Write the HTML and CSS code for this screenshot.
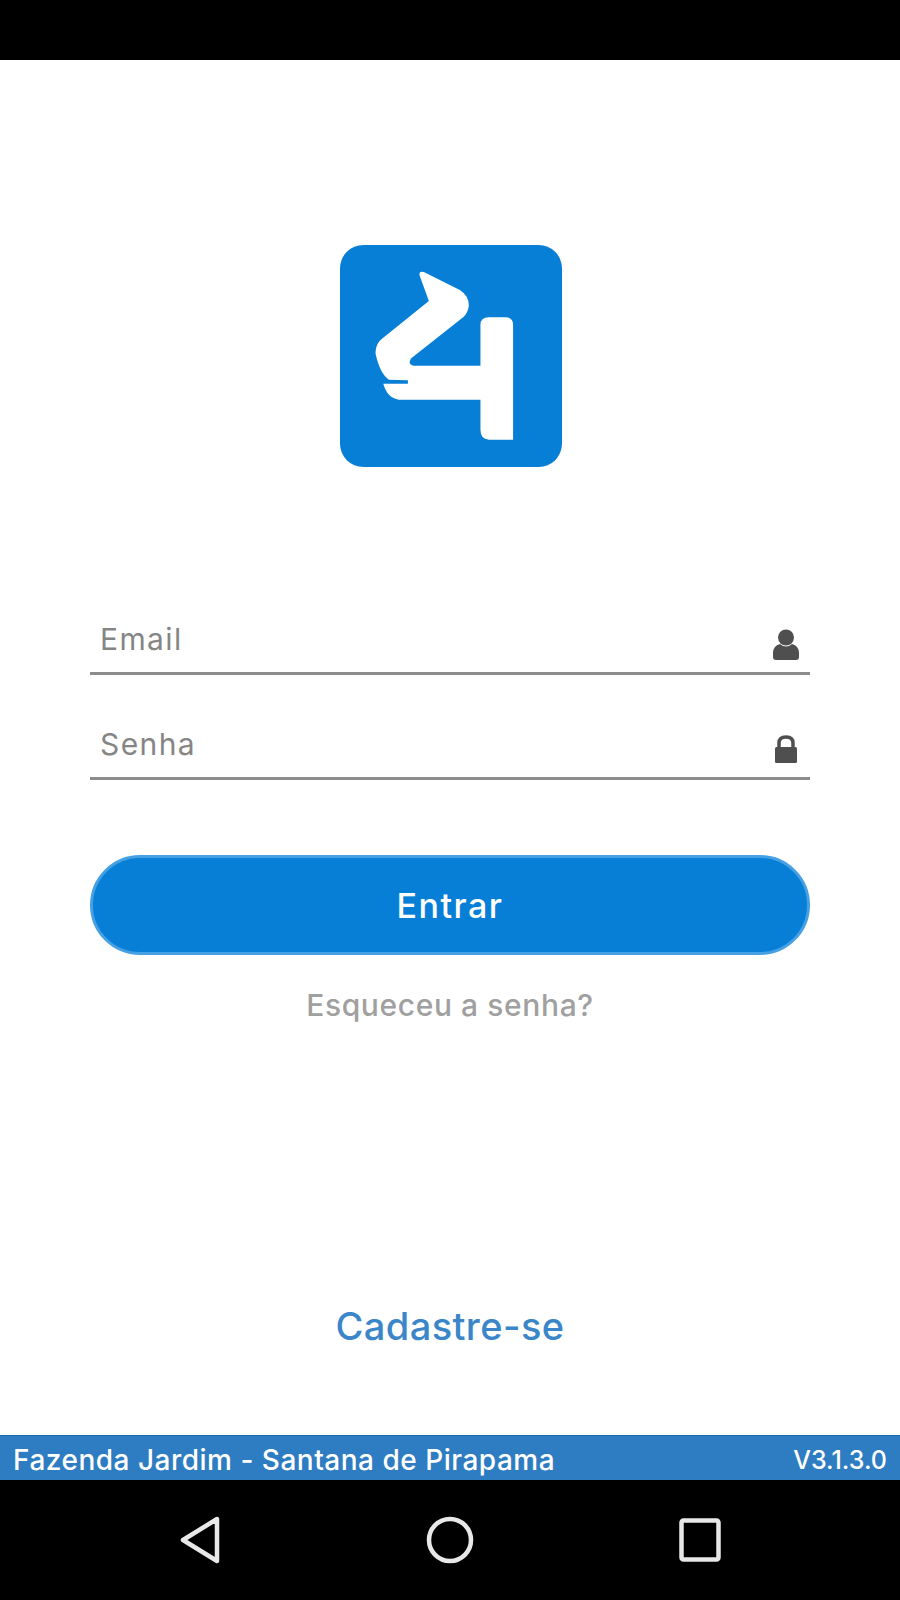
FILE: index.html
```html
<!DOCTYPE html>
<html lang="pt-BR">
<head>
  <meta charset="UTF-8" />
  <meta name="viewport" content="width=device-width, initial-scale=1.0"/>
  <title>Login</title>
  <link rel="stylesheet" href="styles.css">
</head>
<body>

  <div class="status-bar"></div>

  <main class="login">
    <svg class="logo" viewBox="58 45 667 667" aria-label="Logo">
      <rect x="58" y="45" width="667" height="667" rx="70" fill="#087fd6"/>
      <path fill="#fff" d="M297 136 Q294 122 310 126 L418 180 Q446 198 445 228 Q442 250 428 262 L272 385 Q260 402 278 408 L480 408 L480 285 Q480 262 505 262 L555 262 Q578 262 578 285 L578 630 L505 630 Q480 628 480 600 L480 510 L235 510 Q200 505 188 462 L262 462 L262 451 L205 450 Q178 432 165 372 Q163 342 186 325 L325 213 Z"/>
    </svg>

    <form class="login-form">
      <label class="field">
        <input type="text" placeholder="Email" />
        <svg class="field-icon" viewBox="0 0 26 32">
          <circle cx="13" cy="8.5" r="8" fill="#4f4f4f"/>
          <path fill="#4f4f4f" d="M7 15 Q13 20 19 15 Q26 17 26 24 L26 28 Q26 31 23 31 L3 31 Q0 31 0 28 L0 24 Q0 17 7 15 Z"/>
        </svg>
      </label>
      <label class="field">
        <input type="password" placeholder="Senha" />
        <svg class="field-icon" viewBox="0 0 26 32">
          <path fill="none" stroke="#4f4f4f" stroke-width="3.5" d="M6 16 L6 9 Q6 3 13 3 Q20 3 20 9 L20 16"/>
          <rect x="2" y="13" width="22" height="16" rx="1.5" fill="#4f4f4f"/>
        </svg>
      </label>
      <button type="button" class="btn-enter">Entrar</button>
      <a class="forgot">Esqueceu a senha?</a>
    </form>

    <a class="signup">Cadastre-se</a>
  </main>

  <div class="info-bar">
    <span>Fazenda Jardim - Santana de Pirapama</span>
    <span class="version">V3.1.3.0</span>
  </div>

  <nav class="nav-bar">
    <svg class="nav-icon" viewBox="0 0 40 48">
      <path fill="none" stroke="#e8e8e8" stroke-width="4.5" stroke-linejoin="round" d="M37 3 L37 45 L3 24 Z"/>
    </svg>
    <svg class="nav-icon" viewBox="0 0 48 48">
      <circle cx="24" cy="24" r="21" fill="none" stroke="#e8e8e8" stroke-width="4.5"/>
    </svg>
    <svg class="nav-icon" viewBox="0 0 42 44">
      <rect x="2.5" y="2.5" width="37" height="39" rx="2" fill="none" stroke="#e8e8e8" stroke-width="4.5"/>
    </svg>
  </nav>

</body>
</html>
```

FILE: styles.css
```css
body {
  margin: 0;
  height: 1600px;
  display: flex;
  flex-direction: column;
  background: #fff;
  font-family: 'Inter', sans-serif;
}

.status-bar {
  height: 60px;
  background: #000;
}

.login {
  flex: 1;
  display: flex;
  flex-direction: column;
  align-items: center;
  padding-top: 185px;
}

.logo {
  width: 222px;
  height: 222px;
  margin-left: 2px;
}

.login-form {
  width: 720px;
  margin-top: 142px;
  display: flex;
  flex-direction: column;
}

.field {
  height: 63px;
  border-bottom: 3px solid #8c8c8c;
  display: flex;
  align-items: center;
  margin-bottom: 39px;
}

.field input {
  flex: 1;
  min-width: 0;
  border: none;
  outline: none;
  padding: 0 0 3px 10px;
  font-family: inherit;
  font-size: 30px;
  letter-spacing: 1.4px;
  background: transparent;
}

.field input::placeholder {
  color: #858585;
  opacity: 1;
}

.field-icon {
  width: 26px;
  height: 32px;
  margin: 8px 11px 0 0;
}

.btn-enter {
  height: 100px;
  margin-top: 36px;
  border: 3px solid #45a0e4;
  border-radius: 50px;
  background: #087fd6;
  color: #fff;
  font-family: inherit;
  font-size: 34px;
  font-weight: 500;
  letter-spacing: 1.5px;
}

.forgot {
  margin-top: 32px;
  text-align: center;
  font-size: 30px;
  font-weight: 500;
  letter-spacing: .6px;
  color: #a0a0a0;
}

.signup {
  margin-top: 280px;
  font-size: 38px;
  font-weight: 500;
  letter-spacing: .4px;
  color: #3a86c8;
}

.info-bar {
  height: 45px;
  box-sizing: border-box;
  background: #2e7cc1;
  border-top: 1px solid #1a6bb0;
  color: #fff;
  font-size: 28px;
  font-weight: 500;
  letter-spacing: .5px;
  padding: 3px 13px 0;
  display: flex;
  justify-content: space-between;
  align-items: center;
}

.version {
  font-size: 25px;
  letter-spacing: 0;
}

.nav-bar {
  height: 120px;
  background: #000;
  display: grid;
  grid-template-columns: 400px 100px 1fr;
  align-items: center;
}

.nav-icon {
  height: 48px;
}

.nav-icon:nth-child(1) {
  justify-self: end;
  margin-right: 180px;
}

.nav-icon:nth-child(2) {
  justify-self: center;
}

.nav-icon:nth-child(3) {
  margin-left: 179px;
  height: 44px;
}
```
